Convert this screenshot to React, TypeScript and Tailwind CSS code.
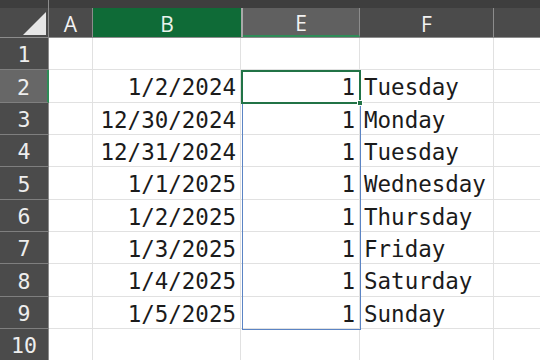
const rows = [
  { n: 1, h: "h-[32px]", date: "", val: "", day: "" },
  { n: 2, h: "h-[33px]", date: "1/2/2024", val: "1", day: "Tuesday" },
  { n: 3, h: "h-[32px]", date: "12/30/2024", val: "1", day: "Monday" },
  { n: 4, h: "h-[32px]", date: "12/31/2024", val: "1", day: "Tuesday" },
  { n: 5, h: "h-[33px]", date: "1/1/2025", val: "1", day: "Wednesday" },
  { n: 6, h: "h-[32px]", date: "1/2/2025", val: "1", day: "Thursday" },
  { n: 7, h: "h-[32px]", date: "1/3/2025", val: "1", day: "Friday" },
  { n: 8, h: "h-[33px]", date: "1/4/2025", val: "1", day: "Saturday" },
  { n: 9, h: "h-[32px]", date: "1/5/2025", val: "1", day: "Sunday" },
  { n: 10, h: "h-[32px]", date: "", val: "", day: "" },
];

const mono = "font-['DejaVu_Sans_Mono','Liberation_Mono',monospace]";

export default function App() {
  return (
    <div className="relative w-[540px] h-[360px] overflow-hidden bg-white">
      {/* top strip */}
      <div className="h-[8px] bg-[#3e3e3e] flex">
        <div className="w-[49px] border-r border-[#8c8c8c]" />
      </div>

      {/* column headers */}
      <div className="flex h-[30px] bg-[#4b4b4b] text-[#f2f2f2] text-[21px] font-['Open_Sans','Noto_Sans',sans-serif] border-b border-[#8c8c8c]">
        <div className="relative w-[49px] shrink-0 border-r border-[#8c8c8c]">
          <svg className="absolute left-[23px] top-[4px]" width="23" height="23" viewBox="0 0 23 23">
            <polygon points="23,0 23,23 0,23" fill="#e6e6e6" />
          </svg>
        </div>
        <div className="w-[44px] shrink-0 flex items-center justify-center pt-[3px] border-r border-[#8c8c8c] leading-none">A</div>
        <div className="w-[148px] shrink-0 flex items-center justify-center pt-[3px] bg-[#0f6b37] text-[#e9f3ec] leading-none">B</div>
        <div className="w-[2px] shrink-0 bg-[#a8a8a8]" />
        <div className="w-[117px] shrink-0 flex items-center justify-center pt-[3px] bg-[#606060] border-r border-[#8c8c8c] border-b-2 border-b-[#2e8b57] leading-none">E</div>
        <div className="w-[134px] shrink-0 flex items-center justify-center pt-[3px] border-r border-[#8c8c8c] leading-none">F</div>
        <div className="flex-1" />
      </div>

      {/* rows */}
      {rows.map((r) => (
        <div key={r.n} className={`flex ${r.h} text-[#1b1b1b] text-[22.5px] ${mono}`}>
          <div
            className={`w-[49px] shrink-0 flex items-center justify-center pt-[4px] text-[21.5px] text-[#eeeeee] border-b border-[#7f7f7f] ${
              r.n === 2 ? "bg-[#676767] border-r-2 border-r-[#2e8b57]" : "bg-[#4b4b4b] border-r border-r-[#8c8c8c]"
            }`}
          >
            {r.n}
          </div>
          <div className="w-[44px] shrink-0 border-r border-b border-[#e1e1e1]" />
          <div className="w-[148px] shrink-0 flex items-center justify-end pr-[4px] pt-[4px] border-r border-b border-[#e1e1e1]">
            {r.date}
          </div>
          <div className="w-[2px] shrink-0 border-b border-[#e1e1e1]" />
          <div className="w-[117px] shrink-0 flex items-center justify-end pr-[4px] pt-[4px] border-r border-b border-[#e1e1e1]">
            {r.val}
          </div>
          <div className="w-[134px] shrink-0 flex items-center pl-[4px] pt-[4px] border-r border-b border-[#e1e1e1]">
            {r.day}
          </div>
          <div className="flex-1 border-b border-[#e1e1e1]" />
        </div>
      ))}

      {/* selection overlays */}
      <div className="absolute left-[242px] top-[102px] w-[119px] h-[228px] border border-[#5b84c4]" />
      <div className="absolute left-[241px] top-[70px] w-[120px] h-[34px] border-2 border-[#217346]" />
      <div className="absolute left-[357px] top-[100px] w-[6px] h-[6px] bg-[#217346] border border-white" />
    </div>
  );
}
